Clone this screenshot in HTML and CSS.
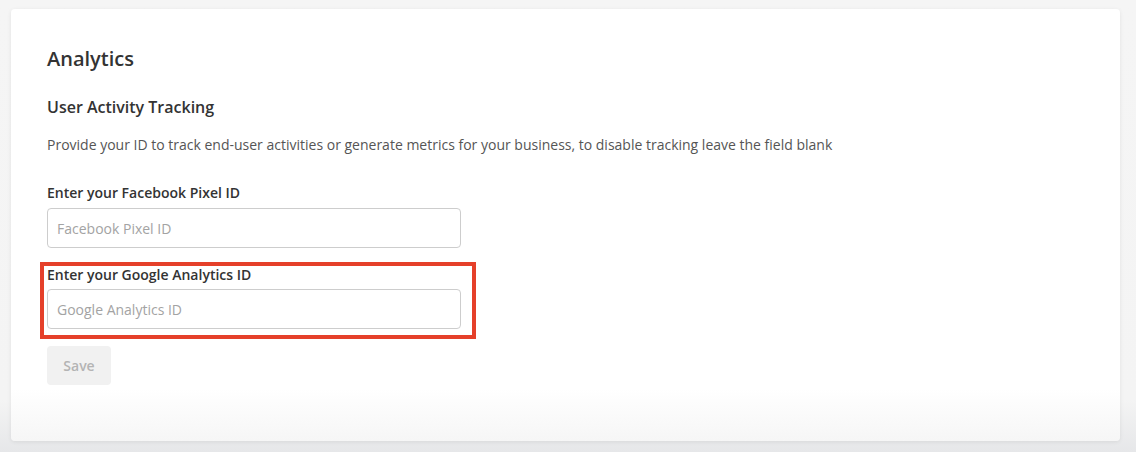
FILE: index.html
```html
<!DOCTYPE html>
<html>
<head>
<meta charset="utf-8">
<link rel="stylesheet" href="styles.css">
</head>
<body>
<div class="card">
  <h1 class="title">Analytics</h1>
  <h2 class="subtitle">User Activity Tracking</h2>
  <p class="desc">Provide your ID to track end-user activities or generate metrics for your business, to disable tracking leave the field blank</p>
  <div class="field">
    <label class="label">Enter your Facebook Pixel ID</label>
    <input class="input" type="text" placeholder="Facebook Pixel ID">
  </div>
  <div class="field highlighted">
    <label class="label">Enter your Google Analytics ID</label>
    <input class="input" type="text" placeholder="Google Analytics ID">
  </div>
  <button class="save">Save</button>
</div>
</body>
</html>
```

FILE: styles.css
```css
html, body {
  margin: 0;
  padding: 0;
}
body {
  background: linear-gradient(#f5f5f5 0, #f4f4f4 400px, #e6e7e9 452px);
  height: 452px;
  overflow: hidden;
  font-family: "Open Sans", "Liberation Sans", sans-serif;
  color: #333;
}
.card {
  margin: 9px 0 0 11px;
  width: 1109px;
  height: 432px;
  box-sizing: border-box;
  padding: 36px 36px 0 36px;
  background: linear-gradient(#ffffff 0, #ffffff 380px, #f6f6f6 432px);
  border-radius: 4px;
  box-shadow: 0 1px 4px rgba(0,0,0,0.08);
  display: flex;
  flex-direction: column;
  align-items: flex-start;
}
.title {
  margin: 0;
  font-size: 20px;
  font-weight: 600;
  line-height: 28px;
  color: #333;
}
.subtitle {
  margin: 23px 0 0 0;
  font-size: 16px;
  font-weight: 600;
  line-height: 22px;
  color: #333;
}
.desc {
  margin: 17px 0 0 0;
  font-size: 14px;
  line-height: 20px;
  color: #555;
}
.field {
  position: relative;
  margin-top: 28px;
  display: flex;
  flex-direction: column;
  gap: 5px;
  width: 414px;
}
.field + .field {
  margin-top: 17px;
  gap: 4px;
}
.label {
  font-size: 14px;
  font-weight: 600;
  line-height: 20px;
  color: #333;
}
.input {
  box-sizing: border-box;
  width: 414px;
  height: 40px;
  margin: 0;
  border: 1px solid #cdcdcd;
  border-radius: 4px;
  padding: 0 9px;
  font-family: "Open Sans", "Liberation Sans", sans-serif;
  font-size: 14px;
  color: #333;
  background: #fff;
  outline: none;
}
.input::placeholder {
  color: #a3a3a3;
}
.highlighted::after {
  content: "";
  position: absolute;
  left: -7px;
  top: -3px;
  right: -15px;
  bottom: -10px;
  border: 4px solid #e5402a;
  pointer-events: none;
}
.save {
  margin-top: 17px;
  width: 64px;
  height: 39px;
  border: none;
  border-radius: 4px;
  background: #f1f1f1;
  color: #b4b4b4;
  font-family: "Open Sans", "Liberation Sans", sans-serif;
  font-size: 14px;
  font-weight: 600;
  padding: 0;
}
```
